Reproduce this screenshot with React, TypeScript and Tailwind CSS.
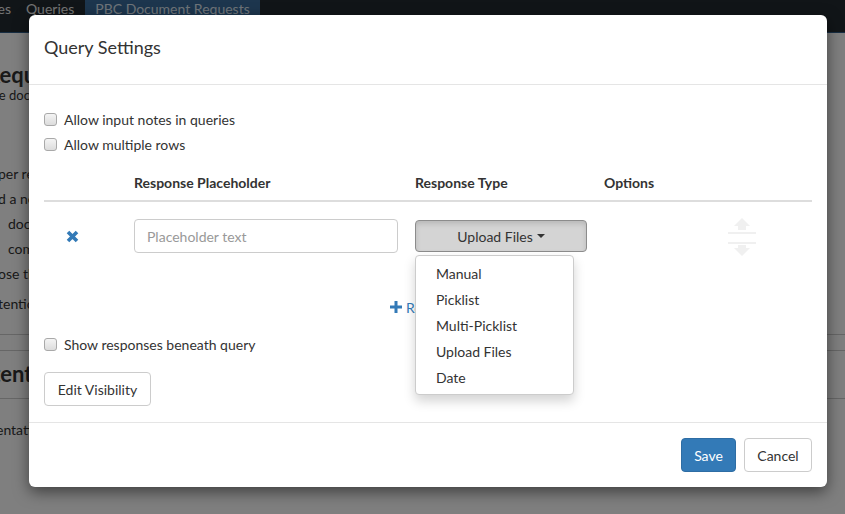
import React from "react";

const font = { fontFamily: "Lato, 'Open Sans', sans-serif" };

function Check({ label }: { label: string }) {
  return (
    <label className="flex items-center h-[25px] text-[14px] text-[#333]">
      <span className="w-[13px] h-[13px] rounded-[3px] border border-[#a9a9a9] bg-gradient-to-b from-[#f4f4f4] to-[#dcdcdc] mr-[7px]" />
      <span>{label}</span>
    </label>
  );
}

function SortIcon() {
  return (
    <svg width="30" height="40" viewBox="0 0 30 40">
      <path d="M15 1 L23 9 L19 9 L19 13 L11 13 L11 9 L7 9 Z" fill="#f0f0f0" />
      <rect x="1" y="15" width="28" height="2" fill="#f0f0f0" />
      <rect x="1" y="25" width="28" height="2" fill="#f0f0f0" />
      <path d="M15 39 L23 31 L19 31 L19 28 L11 28 L11 31 L7 31 Z" fill="#f0f0f0" />
    </svg>
  );
}

export default function App() {
  return (
    <div className="relative w-[845px] h-[514px] overflow-hidden bg-white" style={font}>
      {/* Background page */}
      <div className="h-[33px] bg-[#222a30] border-b border-[#2e5a85] flex items-start text-[14px] leading-[18px]">
        <span className="ml-[-17px] text-[#e8e8e8]">Files</span>
        <span className="ml-[15px] text-[#e8e8e8]">Queries</span>
        <span className="ml-[11px] h-full px-[10px] bg-[#3a6c9d] text-[#dfe8f2]">
          PBC Document Requests
        </span>
      </div>
      <div className="text-[#333]">
        <div className="mt-[28px] ml-[-14px] text-[22px] font-bold leading-[28px]">Requests</div>
        <div className="ml-[-16px] text-[13px] leading-[12px]">The documents</div>
        <div className="mt-[60px] ml-[-2px] text-[14px] leading-[25px]">
          <div>per request</div>
          <div>d a new</div>
          <div className="ml-[10px]">documents</div>
          <div className="ml-[10px]">comments</div>
          <div>ose the</div>
        </div>
        <div className="mt-[5px] ml-[-2px] text-[14px] leading-[25px]">tention</div>
        <div className="mt-[18px] border-t border-[#ccc]" />
        <div className="mt-[15px] border-t border-[#ccc]" />
        <div className="mt-[9px] ml-[-47px] text-[22px] font-bold leading-[28px]">Content</div>
        <div className="mt-[10px] border-t border-[#ccc]" />
        <div className="mt-[20px] ml-[-4px] text-[14px]">entation</div>
      </div>

      {/* Overlay */}
      <div className="absolute inset-0 bg-black/50">
        <div className="absolute left-[29px] top-[15px] w-[798px] h-[472px] bg-white rounded-[6px] shadow-[0_5px_15px_rgba(0,0,0,0.5)] flex flex-col text-[#333]">
          {/* Header */}
          <div className="h-[70px] border-b border-[#e5e5e5] flex items-center px-[15px]">
            <h4 className="text-[18px] leading-[22px] mt-[-6px]">Query Settings</h4>
          </div>
          {/* Body */}
          <div className="flex-1 px-[15px] pt-[22px]">
            <Check label="Allow input notes in queries" />
            <Check label="Allow multiple rows" />
            <div className="mt-[10px] grid grid-cols-[90px_281px_189px_1fr] text-[14px] font-bold leading-[20px] pt-[6px] pb-[7px] border-b-2 border-[#ddd]">
              <div />
              <div>Response Placeholder</div>
              <div>Response Type</div>
              <div>Options</div>
            </div>
            <div className="grid grid-cols-[90px_281px_189px_1fr] items-center h-[68px]">
              <div className="pl-[22px]">
                <svg width="13" height="13" viewBox="0 0 13 13">
                  <path d="M2 2 L11 11 M11 2 L2 11" stroke="#337ab7" strokeWidth="3.6" strokeLinecap="butt" />
                </svg>
              </div>
              <div>
                <div className="w-[264px] h-[34px] border border-[#ccc] rounded-[4px] flex items-center px-[12px] text-[14px] text-[#999]">
                  Placeholder text
                </div>
              </div>
              <div className="relative">
                <div className="w-[172px] h-[32px] bg-[#d4d4d4] border border-[#8c8c8c] rounded-[4px] flex items-center justify-center text-[14px] shadow-[inset_0_3px_5px_rgba(0,0,0,0.125)]">
                  Upload Files
                  <span className="ml-[4px] w-0 h-0 border-l-[4px] border-r-[4px] border-t-[4px] border-l-transparent border-r-transparent border-t-[#333]" />
                </div>
                <div className="absolute left-0 top-[35px] w-[159px] bg-white border border-[#ccc] rounded-[4px] shadow-[0_6px_12px_rgba(0,0,0,0.175)] py-[4px] z-10 text-[14px]">
                  {["Manual", "Picklist", "Multi-Picklist", "Upload Files", "Date"].map((t) => (
                    <div key={t} className="h-[26px] flex items-center px-[20px]">{t}</div>
                  ))}
                </div>
              </div>
              <div className="pl-[123px] pt-[2px]">
                <SortIcon />
              </div>
            </div>
            <div className="mt-[17px] h-[40px] flex items-center pl-[346px] text-[14px] text-[#337ab7]">
              <svg width="12" height="12" viewBox="0 0 12 12" className="mr-[4px]">
                <rect x="4.5" y="0" width="3" height="12" fill="#337ab7" />
                <rect x="0" y="4.5" width="12" height="3" fill="#337ab7" />
              </svg>
              Response
            </div>
            <div className="mt-[5px]">
              <Check label="Show responses beneath query" />
            </div>
            <div className="mt-[15px] w-[107px] h-[34px] border border-[#ccc] rounded-[4px] flex items-center justify-center text-[14px]">
              Edit Visibility
            </div>
          </div>
          {/* Footer */}
          <div className="h-[65px] border-t border-[#e5e5e5] flex items-center justify-end px-[15px] gap-[8px]">
            <div className="w-[55px] h-[34px] bg-[#337ab7] border border-[#2e6da4] rounded-[4px] text-white flex items-center justify-center text-[14px]">
              Save
            </div>
            <div className="w-[68px] h-[34px] border border-[#ccc] rounded-[4px] flex items-center justify-center text-[14px]">
              Cancel
            </div>
          </div>
        </div>
      </div>
    </div>
  );
}
